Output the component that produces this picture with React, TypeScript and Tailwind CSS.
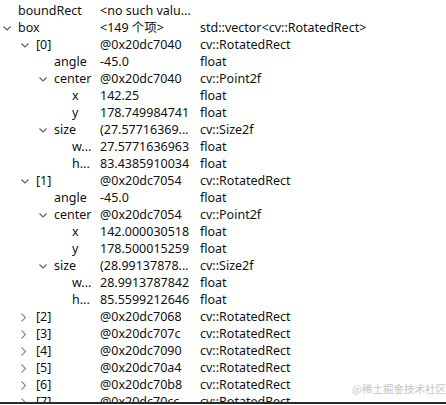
import React from 'react'

type Row = { name: string; value: string; type?: string; level: number; open?: boolean; leaf?: boolean }

const ROWS: Row[] = [
  { name: 'boundRect', value: '<no such valu...', level: 0, leaf: true },
  { name: 'box', value: '<149 个项>', type: 'std::vector<cv::RotatedRect>', level: 0, open: true },
  { name: '[0]', value: '@0x20dc7040', type: 'cv::RotatedRect', level: 1, open: true },
  { name: 'angle', value: '-45.0', type: 'float', level: 2, leaf: true },
  { name: 'center', value: '@0x20dc7040', type: 'cv::Point2f', level: 2, open: true },
  { name: 'x', value: '142.25', type: 'float', level: 3, leaf: true },
  { name: 'y', value: '178.749984741', type: 'float', level: 3, leaf: true },
  { name: 'size', value: '(27.57716369...', type: 'cv::Size2f', level: 2, open: true },
  { name: 'w...', value: '27.5771636963', type: 'float', level: 3, leaf: true },
  { name: 'h...', value: '83.4385910034', type: 'float', level: 3, leaf: true },
  { name: '[1]', value: '@0x20dc7054', type: 'cv::RotatedRect', level: 1, open: true },
  { name: 'angle', value: '-45.0', type: 'float', level: 2, leaf: true },
  { name: 'center', value: '@0x20dc7054', type: 'cv::Point2f', level: 2, open: true },
  { name: 'x', value: '142.000030518', type: 'float', level: 3, leaf: true },
  { name: 'y', value: '178.500015259', type: 'float', level: 3, leaf: true },
  { name: 'size', value: '(28.99137878...', type: 'cv::Size2f', level: 2, open: true },
  { name: 'w...', value: '28.9913787842', type: 'float', level: 3, leaf: true },
  { name: 'h...', value: '85.5599212646', type: 'float', level: 3, leaf: true },
  { name: '[2]', value: '@0x20dc7068', type: 'cv::RotatedRect', level: 1 },
  { name: '[3]', value: '@0x20dc707c', type: 'cv::RotatedRect', level: 1 },
  { name: '[4]', value: '@0x20dc7090', type: 'cv::RotatedRect', level: 1 },
  { name: '[5]', value: '@0x20dc70a4', type: 'cv::RotatedRect', level: 1 },
  { name: '[6]', value: '@0x20dc70b8', type: 'cv::RotatedRect', level: 1 },
  { name: '[7]', value: '@0x20dc70cc', type: 'cv::RotatedRect', level: 1 },
]

// indentation per tree level (18px steps)
const INDENT = ['pl-0', 'pl-[18px]', 'pl-[36px]', 'pl-[54px]']

function Chevron({ open }: { open?: boolean }) {
  return open ? (
    <svg width="8" height="5" viewBox="0 0 8 5" className="ml-[3px]">
      <path d="M0.5 0.5 L4 4 L7.5 0.5" fill="none" stroke="#5a5a5a" strokeWidth="1.1" />
    </svg>
  ) : (
    <svg width="5" height="9" viewBox="0 0 5 9" className="ml-[3px]">
      <path d="M0.5 0.5 L4.5 4.5 L0.5 8.5" fill="none" stroke="#8a8a8a" strokeWidth="1.1" />
    </svg>
  )
}

export default function App() {
  return (
    <div className="relative w-[446px] h-[405px] bg-white overflow-hidden text-[12.5px] text-[#111] font-['Noto_Sans','Noto_Sans_CJK_SC',sans-serif]">
      <div className="h-[402px] overflow-hidden pt-[3px]">
        {ROWS.map((r, i) => (
          <div key={i} className="flex h-[17px] items-center whitespace-nowrap leading-none">
            <div className={`flex items-center w-[100px] ${INDENT[r.level]}`}>
              <div className="w-[18px] flex items-center">{!r.leaf && <Chevron open={r.open} />}</div>
              <span>{r.name}</span>
            </div>
            <div className="w-[100px]">{r.value}</div>
            <div className="flex-1">{r.type}</div>
          </div>
        ))}
      </div>
      <div className="h-[2px] bg-[#2a2a2a]" />
      <div className="absolute left-[352px] top-[381px] text-[10.5px] text-[#c4c4c4] font-['Noto_Sans_CJK_SC',sans-serif]">@稀土掘金技术社区</div>
    </div>
  )
}
